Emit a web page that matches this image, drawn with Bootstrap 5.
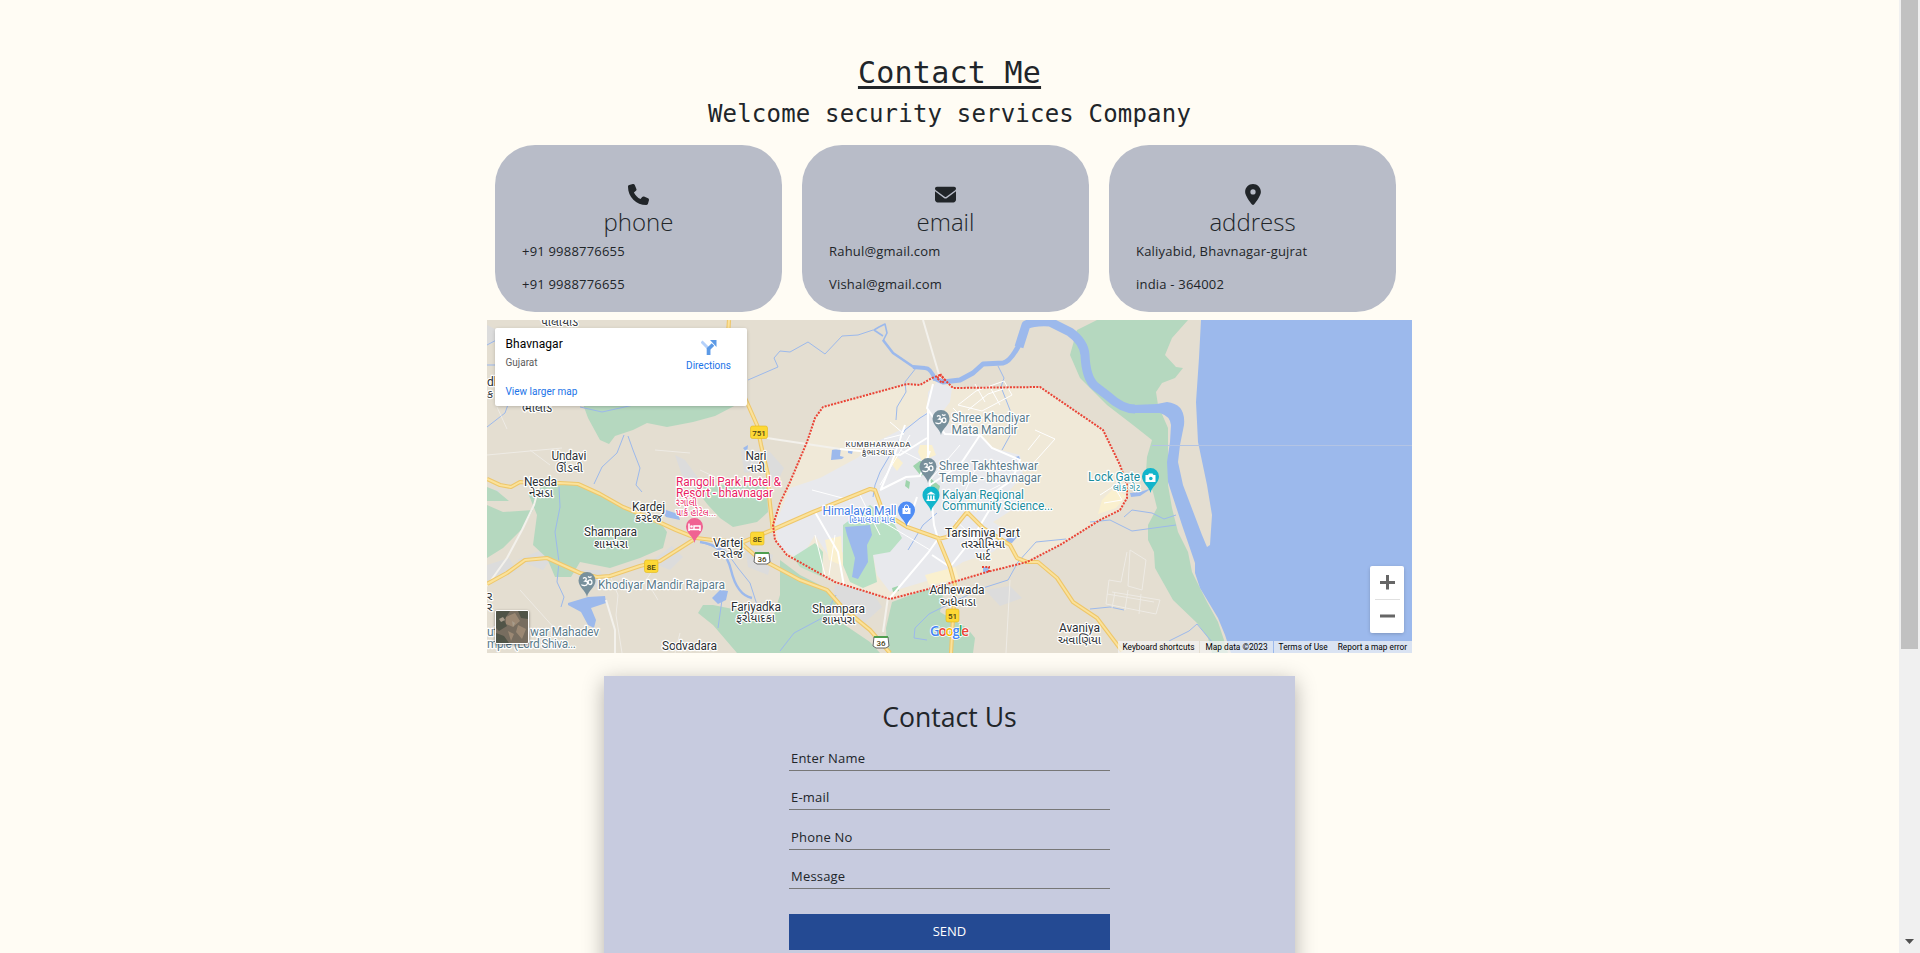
<!DOCTYPE html>
<html lang="en">
<head>
<meta charset="utf-8">
<title>Contact Me</title>
<link href="https://cdn.jsdelivr.net/npm/bootstrap@5.3.0/dist/css/bootstrap.min.css" rel="stylesheet">
<style>
body{background:#fffcf4;font-family:"Open Sans",sans-serif;font-size:13px;letter-spacing:.2px}
.page{width:925px;margin-left:487px;padding-top:54px}
.mono{font-family:"DejaVu Sans Mono",monospace;font-weight:400;white-space:nowrap}
.title{font-size:30px;line-height:38px;letter-spacing:.25px;text-decoration:underline;text-decoration-thickness:3px;text-underline-offset:3px;text-decoration-skip-ink:none}
.subtitle{font-size:24px;line-height:32px;letter-spacing:.19px;margin:6px 0 15px}
.info-row{gap:20px;padding:0 8px;margin-bottom:8px}
.info{width:287px;height:167px;border-radius:40px;background:#b8bcc8;padding:39px 27px 0}
.info svg{display:block;height:21px;margin:0 auto}
.info h2{font-size:24px;font-weight:300;line-height:28px;margin:3px 0 6px;letter-spacing:0}
.info p{line-height:19px;margin-bottom:14px}
.map{height:333px;overflow:hidden;font-family:Roboto,sans-serif;letter-spacing:0}
.map>svg{display:block}
.lbl text{paint-order:stroke;stroke:#fff;stroke-width:2.4px;stroke-linejoin:round;font-size:12px}
.gu{font-family:Roboto,"Noto Sans Gujarati","Lohit Gujarati",sans-serif}
.place{left:8px;top:8px;width:252px;height:78px;background:#fff;border-radius:2px;box-shadow:0 1px 4px -1px rgba(0,0,0,.3);padding:8px 16px 0 10.5px;font-size:10px;color:#1a73e8}
.place-name{font-size:12px;font-weight:400;color:#000;line-height:16px;letter-spacing:.05px}
.zoomer{right:8px;top:246px;width:34px;height:67px;background:#fff;border-radius:2px;box-shadow:0 1px 4px -1px rgba(0,0,0,.3)}
.sat{left:8px;top:290px;width:34px;height:34px;border:1px solid #fff;border-radius:2px;overflow:hidden;box-shadow:0 1px 3px rgba(0,0,0,.4)}
.legal{right:0;bottom:0;height:12px;font-size:8.3px;line-height:12px;color:#000;letter-spacing:0}
.legal span{background:rgba(245,245,245,.7);padding:0 5px;white-space:nowrap}
.contact{width:691px;height:400px;margin:23px 0 0 117px;background:#c7cbdf;box-shadow:0 5px 20px rgba(0,0,0,.3);padding:21px 185px}
.contact h2{font-size:26.6px;font-weight:400;line-height:40px;margin:0 0 11px;letter-spacing:0}
.contact input{display:block;width:100%;height:23px;border:0;border-bottom:1px solid #777;background:transparent;padding:1px 2px 3px;margin-bottom:16.3px;letter-spacing:.2px}
.contact input::placeholder{color:#212529;opacity:1}
.send{height:36px;margin-top:25px;background:#244a93;border-radius:0;color:#fff;font-size:13px;padding:0;letter-spacing:0}
.scroller{width:21px;right:0;background:#f0f0f0}
.thumb{width:17px;height:649px;margin-left:2px;background:#c1c1c1}
</style>
</head>
<body class="vh-100 overflow-hidden position-relative">
<main class="page">
  <h1 class="mono title text-center mb-0">Contact Me</h1>
  <h2 class="mono subtitle text-center">Welcome security services Company</h2>

  <section class="info-row d-flex">
    <div class="info">
      <svg width="21" viewBox="0 0 512 512" fill="#212529"><path d="M164.900 24.600c-7.700-18.600-28-28.500-47.400-23.200l-88 24C12.100 30.200 0 46 0 64c0 247.400 200.600 448 448 448 18 0 33.800-12.100 38.600-29.500l24-88c5.300-19.400-4.600-39.700-23.200-47.400l-96-40c-16.300-6.800-35.200-2.100-46.300 11.600L304.700 368C234.300 334.700 177.300 277.700 144 207.300l49.300-40.300c13.700-11.200 18.400-30 11.600-46.300l-40-96z"/></svg>
      <h2 class="text-center">phone</h2>
      <p>+91 9988776655</p><p>+91 9988776655</p>
    </div>
    <div class="info">
      <svg width="21" viewBox="0 0 512 512" fill="#212529"><path d="M48 64C21.500 64 0 85.500 0 112c0 15.100 7.100 29.300 19.200 38.400l217.600 163.200c11.400 8.500 27 8.500 38.400 0l217.600-163.200C504.900 141.300 512 127.100 512 112c0-26.500-21.500-48-48-48H48zM0 176v208c0 35.300 28.700 64 64 64h384c35.300 0 64-28.700 64-64V176L294.400 339.200c-22.800 17.100-54 17.100-76.800 0L0 176z"/></svg>
      <h2 class="text-center">email</h2>
      <p>Rahul@gmail.com</p><p>Vishal@gmail.com</p>
    </div>
    <div class="info">
      <svg width="16" viewBox="0 0 384 512" fill="#212529"><path d="M215.700 499.200C267 435 384 279.400 384 192 384 86 298 0 192 0S0 86 0 192c0 87.400 117 243 168.300 307.200 12.300 15.300 35.100 15.300 47.400 0zM192 128a64 64 0 1 1 0 128 64 64 0 1 1 0-128z"/></svg>
      <h2 class="text-center">address</h2>
      <p>Kaliyabid, Bhavnagar-gujrat</p><p>india - 364002</p>
    </div>
  </section>

  <section class="map position-relative">
    <svg width="925" height="333" viewBox="487 320 925 333">
      <defs>
        <path id="pin" d="M0 0C-1-6-8.500-10-8.500-16.500a8.500 8.500 0 0 1 17 0C8.500-10 1-6 0 0z"/>
        <path id="om" d="M-4-19.500c2-2 5 0 2 2.500 4 0 3 5-1 4.500-2 0-2.500-1-2.500-1M-.5-16.500c2 0 2-2 4-1.500s2 4.500-.5 4.500-1.500-3-1.500-3M1-21.500c1 1 2.500 1 3.500 0" fill="none" stroke="#fff" stroke-width="1.300"/>
        <path id="city" d="M940 375L932 378 920 385 907 384 823 407 815 418 807 442 790 482 780 503 773 525 775 540 787 555 835 582 890 599 940 586 987 572 1027 562 1060 545 1100 520 1120 510 1127 498 1127 485 1120 465 1103 430 1040 387 953 388z"/>
      </defs>
      <path fill="#e4ded1" d="M487 320h925v333H487z"/>
      <!-- built-up outskirts -->
      <g fill="#dcdcdc">
        <path d="M487 325l12 6 5 8-17 6zM487 565l22-7 8 13-30 12zM517 560l22-9 12 8-8 11zM575 570l25 0 6 14-20 6zM650 562l22-16 11 11-13 13zM675 455l10 5 16 22-16 2zM741 450l29 2 14 16-8 17-15-15-17 3zM745 545l28 10-5 20-20-8zM835 585l35 4 12 18-20 18-30-15zM750 610l14-8 5 14zM985 590l25-4 12 12-22 8zM487 490l13 0-5 12z"/>
      </g>
      <!-- parks and forest -->
      <g fill="#b5d8bf">
        <path d="M580 396L588 418 600 440 609 444 615 436 633 430 647 423 667 427 693 422 715 416 740 403 700 388z"/>
        <path d="M528 493L547 485H580L633 512 660 522 667 532 663 548 640 558 610 568 580 562 571 577 555 577 547 558 533 545 537 515z"/>
        <path d="M487 505L503 512 533 510 523 528 503 548 487 558zM487 487l10 4 12 10-22 0z"/>
        <path d="M692 485H767L768 512 757 522 733 527 720 518 708 505z"/>
        <path d="M780 560L800 575 830 590 837 602 830 615 870 642 880 653H737L713 625 698 613 703 605 713 605 773 617 780 595z"/>
        <path d="M892 602L930 588 943 595 940 612 967 628 975 638 973 653H887L886 628z"/>
        <path d="M1097 320H1188L1172 338 1165 355 1176 367 1183 368 1175 378 1162 383 1156 392 1158 405 1168 428V485L1172 508 1178 532 1188 552 1192 572 1207 602 1218 622 1225 643 1228 653H1212L1208 638 1197 623 1173 600 1155 568 1154 552 1148 540V525L1157 508 1153 492 1146 472 1147 457 1152 440 1133 425 1107 405 1080 378 1070 355 1077 330z"/>
      </g>
      <use href="#city" fill="#f0e9d8"/>
      <path fill="#e8e9ed" d="M937 382L952 388 950 402 940 415 953 428 980 435 993 448 1020 455 1023 475 1010 490 1020 505 993 522 1013 535 993 552 963 562 940 577 890 592 877 575 873 555 843 552 830 558 815 535 800 560 780 548 775 525 790 488 820 478 857 458 880 440 910 425 927 412 928 392z"/>
      <g fill="#faf0cf"><path d="M920 445l12 0 4 10-14 6-4-9zM1102 500l12-12 12 8-10 12-18 6zM925 575l30-8 4 12-30 6zM967 500l14 3-5 10zM825 540l16-4 2 30-14-6zM895 455l8 8-6 8-7-9z"/></g>
      <g fill="#b9e0c4">
        <path d="M843 525L870 505 893 522 902 538 890 552 873 555 877 582 863 588 850 582 843 565z"/>
        <path d="M793 557L815 543 823 552 822 577 800 567z"/>
        <path d="M913 466l8-6 6 12-6 4zM930 478l10 8-2 8-8-6zM892 588l6-2 1 5-6 1zM906 480l4 2-1 7-4-3z" fill="#9fd4ad"/>
      </g>
      <!-- sea, river, lakes -->
      <g fill="#9cb9ec">
        <path d="M1201 320L1199 358 1196 402 1198 442 1207 485 1212 515 1210 545 1207 547 1202 535 1183 485 1178 462 1180 445 1184 425Q1186 404 1167 402L1157 404 1133 405 1133 413H1160Q1170 416 1171 425L1170 442 1167 462 1168 482 1182 525 1195 563V573L1200 588 1218 618 1225 635 1231 653H1412V320z"/>
        <path d="M845 527L870 525 872 535 867 545 868 562 858 579 852 577 855 558 847 535zM832 450l9-2-1 8 4 1-2 2-11 1zM848 450l5 0-1 4-4-1zM568 603l20-6 17-1 1 7-15 5 5 12-2 8-6-3-7-13-13-7zM712 598l8-8 8 1-2 9-8 4zM743 448l5-3-1 8zM660 508l18 6 2 6-14-3zM1008 538l10-2-6 7-10-1zM983 567l6 0-1 6-5-1zM1130 493l10-1 12-4-12 8-9 1zM1015 457l4-1 1 3-4 1z"/>
      </g>
      <g fill="none" stroke="#9cb9ec" stroke-linejoin="round">
        <path stroke-width="9" d="M1135 409Q1122 409 1108 396L1095 386Q1086 378 1085 355 1084 342 1070 332L1050 322Q1034 321 1026 325L1019 347"/>
        <path stroke-width="5" d="M1019 345Q1010 362 1003 363L983 364 973 373 960 380 943 382 934 378"/>
        <path stroke-width="4" d="M935 380Q931 368 925 368L913 367"/>
        <path stroke-width="2.600" d="M915 368L893 353 883 340"/>
        <path stroke-width="1.600" d="M883 341l4-8-2-9-6 3-5 3 9 6"/>
        <path stroke-width="1" d="M873 330L858 335 842 336 825 354 808 342 790 352 780 351M916 368L905 382 906 392 897 407 896 420M998 366L1004 378 1001 387 1010 410 1013 430 1002 450M928 413L920 418 905 430 890 455 880 472 875 485 873 497M780 351L774 358 778 367 748 380M487 365h16M487 427l18-14 5-14 10-12M580 407l22 5 45-10M624 435l-7 18-15 14-8 17M628 436l5 14 7 18-4 17 6 7M559 487l1 20-5 25 4 30-2 20 7 15-3 10M1090 522l20-2 22 11 44-6M1124 517l8-7 20 3 12 6 12-4M1090 609l20-2 14 3M1169 641l20-10 8-7 20 24M927 640l-13-2 1-10 14-14 24-12 30-14 25-8 10-18 18-20 30-3M908 550l15-25 14-12M780 651l14-18 30-16 12-22M700 542l25 8 13 18 12 15 8 25M722 600l-4 28M487 345l15-8"/>
        <path stroke-width="2.400" d="M700 542Q725 545 731 570T752 598"/>
      </g>
      <path stroke="#b3c4e4" fill="none" d="M1152 445.500h260"/>
      <!-- local roads -->
      <g fill="none" stroke="#eeebe5" stroke-width="1">
        <path d="M610 575l8 20-2 20 6 38M520 590l45 50M487 455l75-7M655 450l35 3M660 560l-14 20 12 20M700 470l30 14M675 653l5-20M1010 580l-4 73M1130 550l16 10-4 30-14-4zM1127 552l-6 30-12-2-3 24 50 10 4-14-48-8M1107 594l47 8M1115 592l-3 16M1128 590l-3 20M1141 594l-2 20M497 407l10 22M530 450l20 15"/>
      </g>
      <path fill="none" stroke="#f3f1ec" stroke-width="2" d="M540 483l-6 22-12 25-15 28-20 28M606 600l9 30 0 23M767 438l13 2 60 9M923 320l17 58M888 597l-5 35"/>
      <g fill="none" stroke="#fff" stroke-width="1">
        <path d="M958 405l18-14 28-10 8 14-30 16zM968 410l20-16 18-6M975 384l10 18M990 387l10 18M1005 415l-40 5-12-12M890 422l14 12-20 5M1035 430l20 9-25 28M1040 435l-12 15M1100 495l14-9 8 14-18 3M815 535l10 40M835 535l-6 40M910 435l-30 50M900 450l40 20M960 445l-30 35M975 470l-14 30M1000 485l-30 15M880 520l50 30M1005 500l20 8M955 520l22 20M860 495l20 40M812 490l38 10"/>
        <path stroke-width="2" d="M933 384l-6 24 12 18 6 8 35 1 12 13 28 12-8 20-20 14M980 435l-20 30-30 20M928 410l0 55 6 60 4 14M840 449l60 6 27-17M880 490l26-13 14-1 10-25M815 512l23 40 6 34M890 598l38-45 12-17M932 555l18 12 22-28 30-50M907 527l10-30M905 425l-14 40-10 24"/>
      </g>
      <!-- highways -->
      <g fill="none" stroke-linejoin="round">
        <path stroke="#eec76b" stroke-width="4.200" d="M487 479L500 485 511 487 520 482 540 484 560 483 578 484 600 494 623 507 650 518 676 530 696 538 713 540 743 542 772 530 813 512 870 489 875 490 883 512 907 527 938 538 950 567 955 585 953 618 951 653M487 584L507 573 525 560 547 558 580 573 597 577 610 576 640 566 660 561 693 540M743 545L757 557 800 580 827 590 843 608 870 630 890 653M938 539L947 537 967 512 983 528 1010 545 1017 558 1027 562 1038 562 1057 578 1073 602 1097 618 1122 651M729 320L728 335M745 398L757 425 761 445 768 475 769 495 773 531"/>
        <path stroke="#fbe29a" stroke-width="2" d="M487 479L500 485 511 487 520 482 540 484 560 483 578 484 600 494 623 507 650 518 676 530 696 538 713 540 743 542 772 530 813 512 870 489 875 490 883 512 907 527 938 538 950 567 955 585 953 618 951 653M487 584L507 573 525 560 547 558 580 573 597 577 610 576 640 566 660 561 693 540M743 545L757 557 800 580 827 590 843 608 870 630 890 653M938 539L947 537 967 512 983 528 1010 545 1017 558 1027 562 1038 562 1057 578 1073 602 1097 618 1122 651M729 320L728 335M745 398L757 425 761 445 768 475 769 495 773 531"/>
      </g>
      <use href="#city" fill="none" stroke="#ea4335" stroke-width="2" stroke-dasharray="2 1.300"/>
      <path d="M937 378l4-3 4 5-3 3zM982 567h7v5" fill="none" stroke="#ea4335" stroke-width="2" stroke-dasharray="2 1.300"/>
      <!-- road shields -->
      <g font-size="8" text-anchor="middle" fill="#4b4113" font-weight="500">
        <g fill="#fdd835" stroke="#e3b81c" stroke-width=".6"><rect x="750.500" y="426" width="17" height="12.500" rx="2"/><rect x="750.500" y="532" width="13.500" height="13" rx="2"/><rect x="644.500" y="560" width="13.500" height="12.500" rx="2"/><rect x="946" y="609" width="13" height="13" rx="2"/></g>
        <text x="759" y="435.500">751</text><text x="757.300" y="541.500">8E</text><text x="651.300" y="569.500">8E</text><text x="952.500" y="618.500">51</text>
        <g fill="#fff" stroke="#666"><path d="M755 553h14l1 9-3 2h-10l-3-2zM874 637h14l1 9-3 2h-10l-3-2z"/></g>
        <path stroke="#4f9e4f" stroke-width="2" d="M755 553h14M874 637h14"/>
        <text x="762" y="562">36</text><text x="881" y="646">36</text>
      </g>
      <!-- place names -->
      <g class="lbl gu" fill="#2b2f33">
        <text x="541" y="326" textLength="37">પાલીયાડ</text>
        <text x="487" y="386">dh</text><text x="487" y="398">ક</text>
        <text x="522" y="412" textLength="30">ભીલોડ</text>
        <text x="551.500" y="460" textLength="35">Undavi</text><text x="556" y="472" textLength="27">ઊંડવી</text>
        <text x="524" y="485.500" textLength="33">Nesda</text><text x="529" y="497" textLength="24">નેસડા</text>
        <text x="745.500" y="460" textLength="21">Nari</text><text x="747" y="472" textLength="18">નારી</text>
        <text x="632" y="510.500" textLength="33">Kardej</text><text x="635" y="522" textLength="27">કરદેજ</text>
        <text x="584" y="536" textLength="53">Shampara</text><text x="594" y="547.500" textLength="34">શામપરા</text>
        <text x="713" y="546.500" textLength="30">Vartej</text><text x="713" y="557.500" textLength="30">વરતેજ</text>
        <text x="731" y="610.500" textLength="50">Fariyadka</text><text x="736" y="622" textLength="39">ફરીયાદકા</text>
        <text x="662" y="650" textLength="55">Sodvadara</text>
        <text x="812" y="612.500" textLength="53">Shampara</text><text x="822" y="624" textLength="33">શામપરા</text>
        <text x="929.500" y="594" textLength="55">Adhewada</text><text x="940" y="605.500" textLength="36">અધેવાડા</text>
        <text x="945" y="536.500" textLength="75">Tarsimiya Part</text><text x="961" y="548" textLength="44">તરસીમિયા</text><text x="975" y="560" textLength="15">પાર્ટ</text>
        <text x="1059" y="632" textLength="41">Avaniya</text><text x="1058" y="643.500" textLength="43">અવાણિયા</text>
        <text x="487" y="600">ર</text><text x="487" y="611">ર</text>
        <text x="845.500" y="447" textLength="65" style="font-size:8px">KUMBHARWADA</text><text x="862" y="455" textLength="32" style="font-size:8px">કુંભારવાડા</text>
      </g>
      <g class="lbl" fill="#5b7b8b">
        <text x="951.500" y="422" textLength="78">Shree Khodiyar</text><text x="951.500" y="434" textLength="66">Mata Mandir</text>
        <text x="939" y="470" textLength="99">Shree Takhteshwar</text><text x="939" y="481.500" textLength="102">Temple - bhavnagar</text>
        <text x="598" y="589" textLength="127">Khodiyar Mandir Rajpara</text>
        <text x="487" y="636">uta</text><text x="530" y="636" textLength="69">war Mahadev</text><text x="487" y="647.500" textLength="89">mple (Lord Shiva...</text>
      </g>
      <g class="lbl gu" fill="#e91e63">
        <text x="676" y="485.500" textLength="105">Rangoli Park Hotel &amp;</text><text x="676" y="497" textLength="97">Resort - bhavnagar</text>
        <text x="676" y="506" textLength="21" style="font-size:9px">રંગોલી</text><text x="676" y="516" textLength="40" style="font-size:9px">પાર્ક હોટેલ...</text>
      </g>
      <g class="lbl gu" fill="#1b8c9c">
        <text x="942" y="498.500" textLength="82">Kalyan Regional</text><text x="942" y="510" textLength="111">Community Science...</text>
        <text x="1088" y="481" textLength="52">Lock Gate</text><text x="1113" y="491" textLength="27" style="font-size:9px">લોક ગેટ</text>
      </g>
      <g class="lbl gu" fill="#3f7de8"><text x="822.500" y="514.500" textLength="74">Himalaya Mall</text><text x="849" y="523" textLength="46" style="font-size:9px">હિમાલયા મોલ</text></g>
      <g fill="#78909c"><use href="#pin" x="941" y="435"/><use href="#pin" x="928" y="483"/><use href="#pin" x="587" y="597"/></g>
      <use href="#om" x="941" y="436"/><use href="#om" x="928" y="484"/><use href="#om" x="587" y="598"/>
      <use href="#pin" x="694.500" y="543" fill="#f06292"/><path d="M689 523.500v7.500M689 529.500h11v1.500M700 530v-4h-6v3" stroke="#fff" stroke-width="1.500" fill="none"/><circle cx="691.500" cy="526.500" r="1.300" fill="#fff"/>
      <use href="#pin" x="906.500" y="526.500" fill="#4f8df5"/><path d="M902.500 508h8v6h-8z" fill="#fff"/><path d="M904.500 508v-1a2 2 0 0 1 4 0v1" stroke="#fff" fill="none"/><path d="M905 510.500q1.500 2 3 0" stroke="#4f8df5" fill="none"/>
      <g fill="#12b5cb"><use href="#pin" x="931" y="511.500"/><use href="#pin" x="1150.500" y="493"/></g>
      <path d="M926.500 494.500l4.500-3 4.500 3zM927.500 495.500h1.500v4h-1.500zM930.200 495.500h1.600v4h-1.600zM933 495.500h1.500v4H933zM926.500 499.500h9v1.500h-9z" fill="#fff"/>
      <path d="M1145.500 475h2.500l1-1.500h3.500l1 1.500h2v7h-10z" fill="#fff"/><circle cx="1150.800" cy="478.500" r="1.800" fill="#12b5cb"/>
      <g font-family="Open Sans" font-size="13.500" font-weight="600" stroke="#fff" stroke-width="1.500" paint-order="stroke"><text x="930" y="635.500" textLength="39" fill="#4285f4">G<tspan fill="#ea4335">o</tspan><tspan fill="#fbbc04">o</tspan><tspan fill="#4285f4">g</tspan><tspan fill="#34a853">l</tspan><tspan fill="#ea4335">e</tspan></text></g>
    </svg>
    <div class="place position-absolute d-flex justify-content-between">
      <div class="d-flex flex-column"><span class="place-name">Bhavnagar</span><span style="color:#5b5b5b;line-height:14px;margin-top:4px">Gujarat</span><span style="line-height:14px;margin-top:15px">View larger map</span></div>
      <div class="d-flex flex-column align-items-center" style="padding-top:4px"><svg width="16" height="15" viewBox="0 0 16 15"><path d="M.5 1.500L8 9v6" fill="none" stroke="#b5d1fa" stroke-width="3"/><path d="M7.500 15V9l4.500-4.500" fill="none" stroke="#5c9ae6" stroke-width="3.600"/><path d="M9 0h6.500v7z" fill="#5c9ae6"/></svg><span style="line-height:14px;margin-top:4px">Directions</span></div>
    </div>
    <div class="sat position-absolute"><svg width="32" height="32" viewBox="0 0 32 32"><path fill="#776d5f" d="M0 0h32v32H0z"/><path fill="#505447" d="M0 0h14l-6 9 3 6-8 5-3-3zM0 22l8 3 5 7H0zM22 0h10v8l-7-1z"/><path fill="#9b8873" d="M10 6l9-4 5 8-7 6-7-3zM22 14l8 4-4 10-6-7zM12 20l6 3-3 7z"/><path fill="#a79c8b" d="M3 8l4-2 2 3-4 2zM16 10l3 2-2 4z"/></svg></div>
    <div class="zoomer position-absolute"><svg width="34" height="67"><path d="M10 16.500h15M17.500 9v14.500M10 50h15" stroke="#666" stroke-width="3"/><path d="M5 33.500h25" stroke="#e0e0e0"/></svg></div>
    <div class="legal position-absolute d-flex"><span>Keyboard shortcuts</span><span style="margin-left:1px">Map data ©2023</span><span style="margin-left:1px">Terms of Use</span><span>Report a map error</span></div>
  </section>

  <form class="contact">
    <h2 class="text-center">Contact Us</h2>
    <input type="text" placeholder="Enter Name">
    <input type="text" placeholder="E-mail">
    <input type="text" placeholder="Phone No">
    <input type="text" placeholder="Message">
    <button type="button" class="btn send w-100 d-block">SEND</button>
  </form>
</main>
<div class="scroller position-absolute top-0 bottom-0 d-flex flex-column justify-content-between">
  <div class="thumb"></div>
  <svg width="21" height="18" viewBox="0 0 21 18"><path d="M6 4h9l-4.500 5z" fill="#505050"/></svg>
</div>
<script src="https://cdn.jsdelivr.net/npm/bootstrap@5.3.0/dist/js/bootstrap.bundle.min.js"></script>
</body>
</html>
